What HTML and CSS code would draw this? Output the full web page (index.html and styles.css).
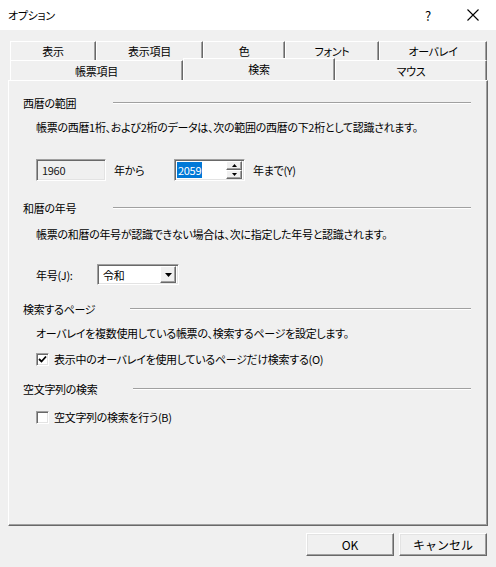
FILE: index.html
```html
<!DOCTYPE html>
<html lang="ja">
<head>
    <meta charset="UTF-8">
    <title>オプション</title>
    <link rel="stylesheet" href="styles.css">
</head>
<body>

<div class="titlebar">
    <span class="title">オプション</span>
    <span class="help">?</span>
    <span class="close">
        <svg width="12" height="12" viewBox="0 0 12 12"><path d="M0.5 0.5 L11.5 11.5 M11.5 0.5 L0.5 11.5" stroke="#000" stroke-width="1.1" fill="none"/></svg>
    </span>
</div>

<div class="dialog">
    <!-- タブ -->
    <div class="tabs">
        <div class="tab-row back">
            <div class="tab w86">表示</div>
            <div class="tab w107">表示項目</div>
            <div class="tab w82">色</div>
            <div class="tab w94">フォント</div>
            <div class="tab w108">オーバレイ</div>
        </div>
        <div class="tab-row front">
            <div class="tab w173">帳票項目</div>
            <div class="tab w152 active">検索</div>
            <div class="tab w152">マウス</div>
        </div>
    </div>

    <div class="panel">
        <!-- 西暦の範囲 -->
        <div class="group-head"><span class="head-label w90">西暦の範囲</span><span class="rule"></span></div>
        <p class="desc">帳票の西暦1桁、および2桁のデータは、次の範囲の西暦の下2桁として認識されます。</p>
        <div class="range-row">
            <div class="field disabled">1960</div>
            <span class="from-label">年から</span>
            <div class="field spin">
                <span class="sel">2059</span>
                <div class="spin-btns">
                    <div class="spin-btn"><svg width="5" height="3" viewBox="0 0 5 3"><path d="M2.5 0 L5 3 L0 3 Z" fill="#000"/></svg></div>
                    <div class="spin-btn"><svg width="5" height="3" viewBox="0 0 5 3"><path d="M0 0 L5 0 L2.5 3 Z" fill="#000"/></svg></div>
                </div>
            </div>
            <span class="to-label">年まで(Y)</span>
        </div>

        <!-- 和暦の年号 -->
        <div class="group-head g2"><span class="head-label w90">和暦の年号</span><span class="rule"></span></div>
        <p class="desc d2">帳票の和暦の年号が認識できない場合は、次に指定した年号と認識されます。</p>
        <div class="era-row">
            <span class="era-label">年号(J):</span>
            <div class="field combo">
                <span class="combo-text">令和</span>
                <div class="combo-btn"><svg width="7" height="4" viewBox="0 0 7 4"><path d="M0 0 L7 0 L3.5 4 Z" fill="#000"/></svg></div>
            </div>
        </div>

        <!-- 検索するページ -->
        <div class="group-head g3"><span class="head-label w107">検索するページ</span><span class="rule"></span></div>
        <p class="desc d3">オーバレイを複数使用している帳票の、検索するページを設定します。</p>
        <label class="check-row c1">
            <span class="checkbox"><svg width="9" height="9" viewBox="0 0 9 9"><path d="M1 4 L3.5 6.5 L8 1.5" stroke="#000" stroke-width="1.8" fill="none"/></svg></span>
            表示中のオーバレイを使用しているページだけ検索する(O)
        </label>

        <!-- 空文字列の検索 -->
        <div class="group-head g4"><span class="head-label w110">空文字列の検索</span><span class="rule"></span></div>
        <label class="check-row c2">
            <span class="checkbox"></span>
            空文字列の検索を行う(B)
        </label>
    </div>

    <div class="buttons">
        <button class="btn">OK</button>
        <button class="btn">キャンセル</button>
    </div>
</div>

</body>
</html>
```

FILE: styles.css
```css
body {
    margin: 0;
    width: 496px;
    height: 567px;
    overflow: hidden;
    background-color: #f0f0f0;
    font-family: "Noto Sans CJK JP", "Noto Sans", sans-serif;
    font-size: 11px;
    letter-spacing: -0.3px;
    font-feature-settings: "palt";
    color: #000;
}
.titlebar {
    height: 30px;
    background-color: #fff;
    display: flex;
    align-items: center;
    padding-left: 8px;
}
.title {
    flex: 1;
}
.help {
    width: 20px;
    text-align: center;
    margin-right: 12px;
    font-size: 13px;
}
.close {
    width: 46px;
    display: flex;
    justify-content: center;
}
.dialog {
    padding: 11px 8px 0 8px;
}
.tabs {
    padding: 0 1px 0 2px;
}
.tab-row {
    display: flex;
}
.tab-row.back {
    height: 19px;
}
.tab-row.front {
    height: 20px;
}
.tab {
    box-sizing: border-box;
    border-top: 1px solid #fff;
    border-left: 1px solid #fff;
    border-right: 1px solid #696969;
    box-shadow: inset -1px 0 #a0a0a0;
    text-align: center;
    line-height: 18px;
    background-color: #f0f0f0;
}
.tab-row.front .tab {
    line-height: 20px;
}
.tab.active {
    position: relative;
    z-index: 1;
    height: 22px;
    margin-top: -2px;
    line-height: 18px;
}
.w86 { width: 86px; }
.w107 { width: 107px; }
.w82 { width: 82px; }
.w94 { width: 94px; }
.w108 { width: 108px; }
.w173 { width: 173px; }
.w152 { width: 152px; }
.panel {
    box-sizing: border-box;
    height: 446px;
    border-top: 1px solid #fff;
    border-left: 1px solid #fff;
    border-right: 1px solid #696969;
    border-bottom: 1px solid #696969;
    box-shadow: inset -1px -1px #a0a0a0;
    padding: 14px 0 0 14px;
}
.group-head {
    display: flex;
    align-items: center;
    height: 16px;
    line-height: 16px;
    margin-right: 16px;
}
.head-label {
    flex: none;
}
.head-label.w90 { width: 90px; }
.head-label.w107 { width: 107px; }
.head-label.w110 { width: 110px; }
.rule {
    flex: 1;
    border-top: 1px solid #a0a0a0;
    border-bottom: 1px solid #fff;
}
.desc {
    margin: 8px 0 0 13px;
    line-height: 16px;
    white-space: nowrap;
}
.field {
    box-sizing: border-box;
    border: 1px solid;
    border-color: #a0a0a0 #fff #fff #a0a0a0;
    box-shadow: inset 1px 1px #696969, inset -1px -1px #e3e3e3;
    background-color: #fff;
}
.range-row {
    display: flex;
    align-items: center;
    height: 22px;
    margin: 24px 0 0 13px;
}
.field.disabled {
    width: 70px;
    height: 22px;
    background-color: #f0f0f0;
    color: #1a1a1a;
    line-height: 20px;
    padding-left: 5px;
}
.from-label {
    width: 60px;
    margin-left: 8px;
}
.field.spin {
    width: 71px;
    height: 22px;
    display: flex;
    align-items: center;
    padding: 2px 2px 2px 2px;
}
.sel {
    background-color: #0078d7;
    color: #fff;
    line-height: 16px;
    padding: 0 1px;
    margin-right: auto;
}
.spin-btns {
    display: flex;
    flex-direction: column;
    width: 16px;
    height: 18px;
}
.spin-btn {
    box-sizing: border-box;
    height: 9px;
    border: 1px solid;
    border-color: #fff #696969 #696969 #fff;
    box-shadow: inset -1px -1px #a0a0a0;
    background-color: #f0f0f0;
    display: flex;
    align-items: center;
    justify-content: center;
}
.to-label {
    margin-left: 8px;
}
.group-head.g2 {
    margin-top: 19px;
}
.desc.d2 {
    margin-top: 10px;
}
.era-row {
    display: flex;
    align-items: center;
    height: 21px;
    margin: 22px 0 0 13px;
}
.era-label {
    width: 61px;
}
.field.combo {
    width: 82px;
    height: 21px;
    display: flex;
    align-items: center;
    padding: 2px;
}
.combo-text {
    flex: 1;
    padding-left: 3px;
}
.combo-btn {
    box-sizing: border-box;
    width: 16px;
    height: 17px;
    border: 1px solid;
    border-color: #fff #696969 #696969 #fff;
    box-shadow: inset -1px -1px #a0a0a0;
    background-color: #f0f0f0;
    display: flex;
    align-items: center;
    justify-content: center;
}
.group-head.g3 {
    margin-top: 16px;
}
.desc.d3 {
    margin-top: 8px;
}
.check-row {
    display: flex;
    align-items: center;
    height: 16px;
    line-height: 16px;
    margin-left: 13px;
}
.check-row.c1 {
    margin-top: 10px;
}
.checkbox {
    box-sizing: border-box;
    width: 13px;
    height: 13px;
    margin-right: 5px;
    border: 1px solid;
    border-color: #a0a0a0 #fff #fff #a0a0a0;
    box-shadow: inset 1px 1px #696969, inset -1px -1px #e3e3e3;
    background-color: #fff;
    display: flex;
    align-items: center;
    justify-content: center;
}
.group-head.g4 {
    margin-top: 14px;
}
.check-row.c2 {
    margin-top: 12px;
}
.buttons {
    display: flex;
    justify-content: flex-end;
    gap: 5px;
    margin-top: 7px;
    padding-right: 1px;
}
.btn {
    box-sizing: border-box;
    width: 88px;
    height: 23px;
    font-family: inherit;
    font-size: 12px;
    color: #000;
    background-color: #f0f0f0;
    border: 1px solid;
    border-color: #fff #696969 #696969 #fff;
    box-shadow: inset -1px -1px #a0a0a0, inset 1px 1px #e3e3e3;
    padding: 0;
}
```
